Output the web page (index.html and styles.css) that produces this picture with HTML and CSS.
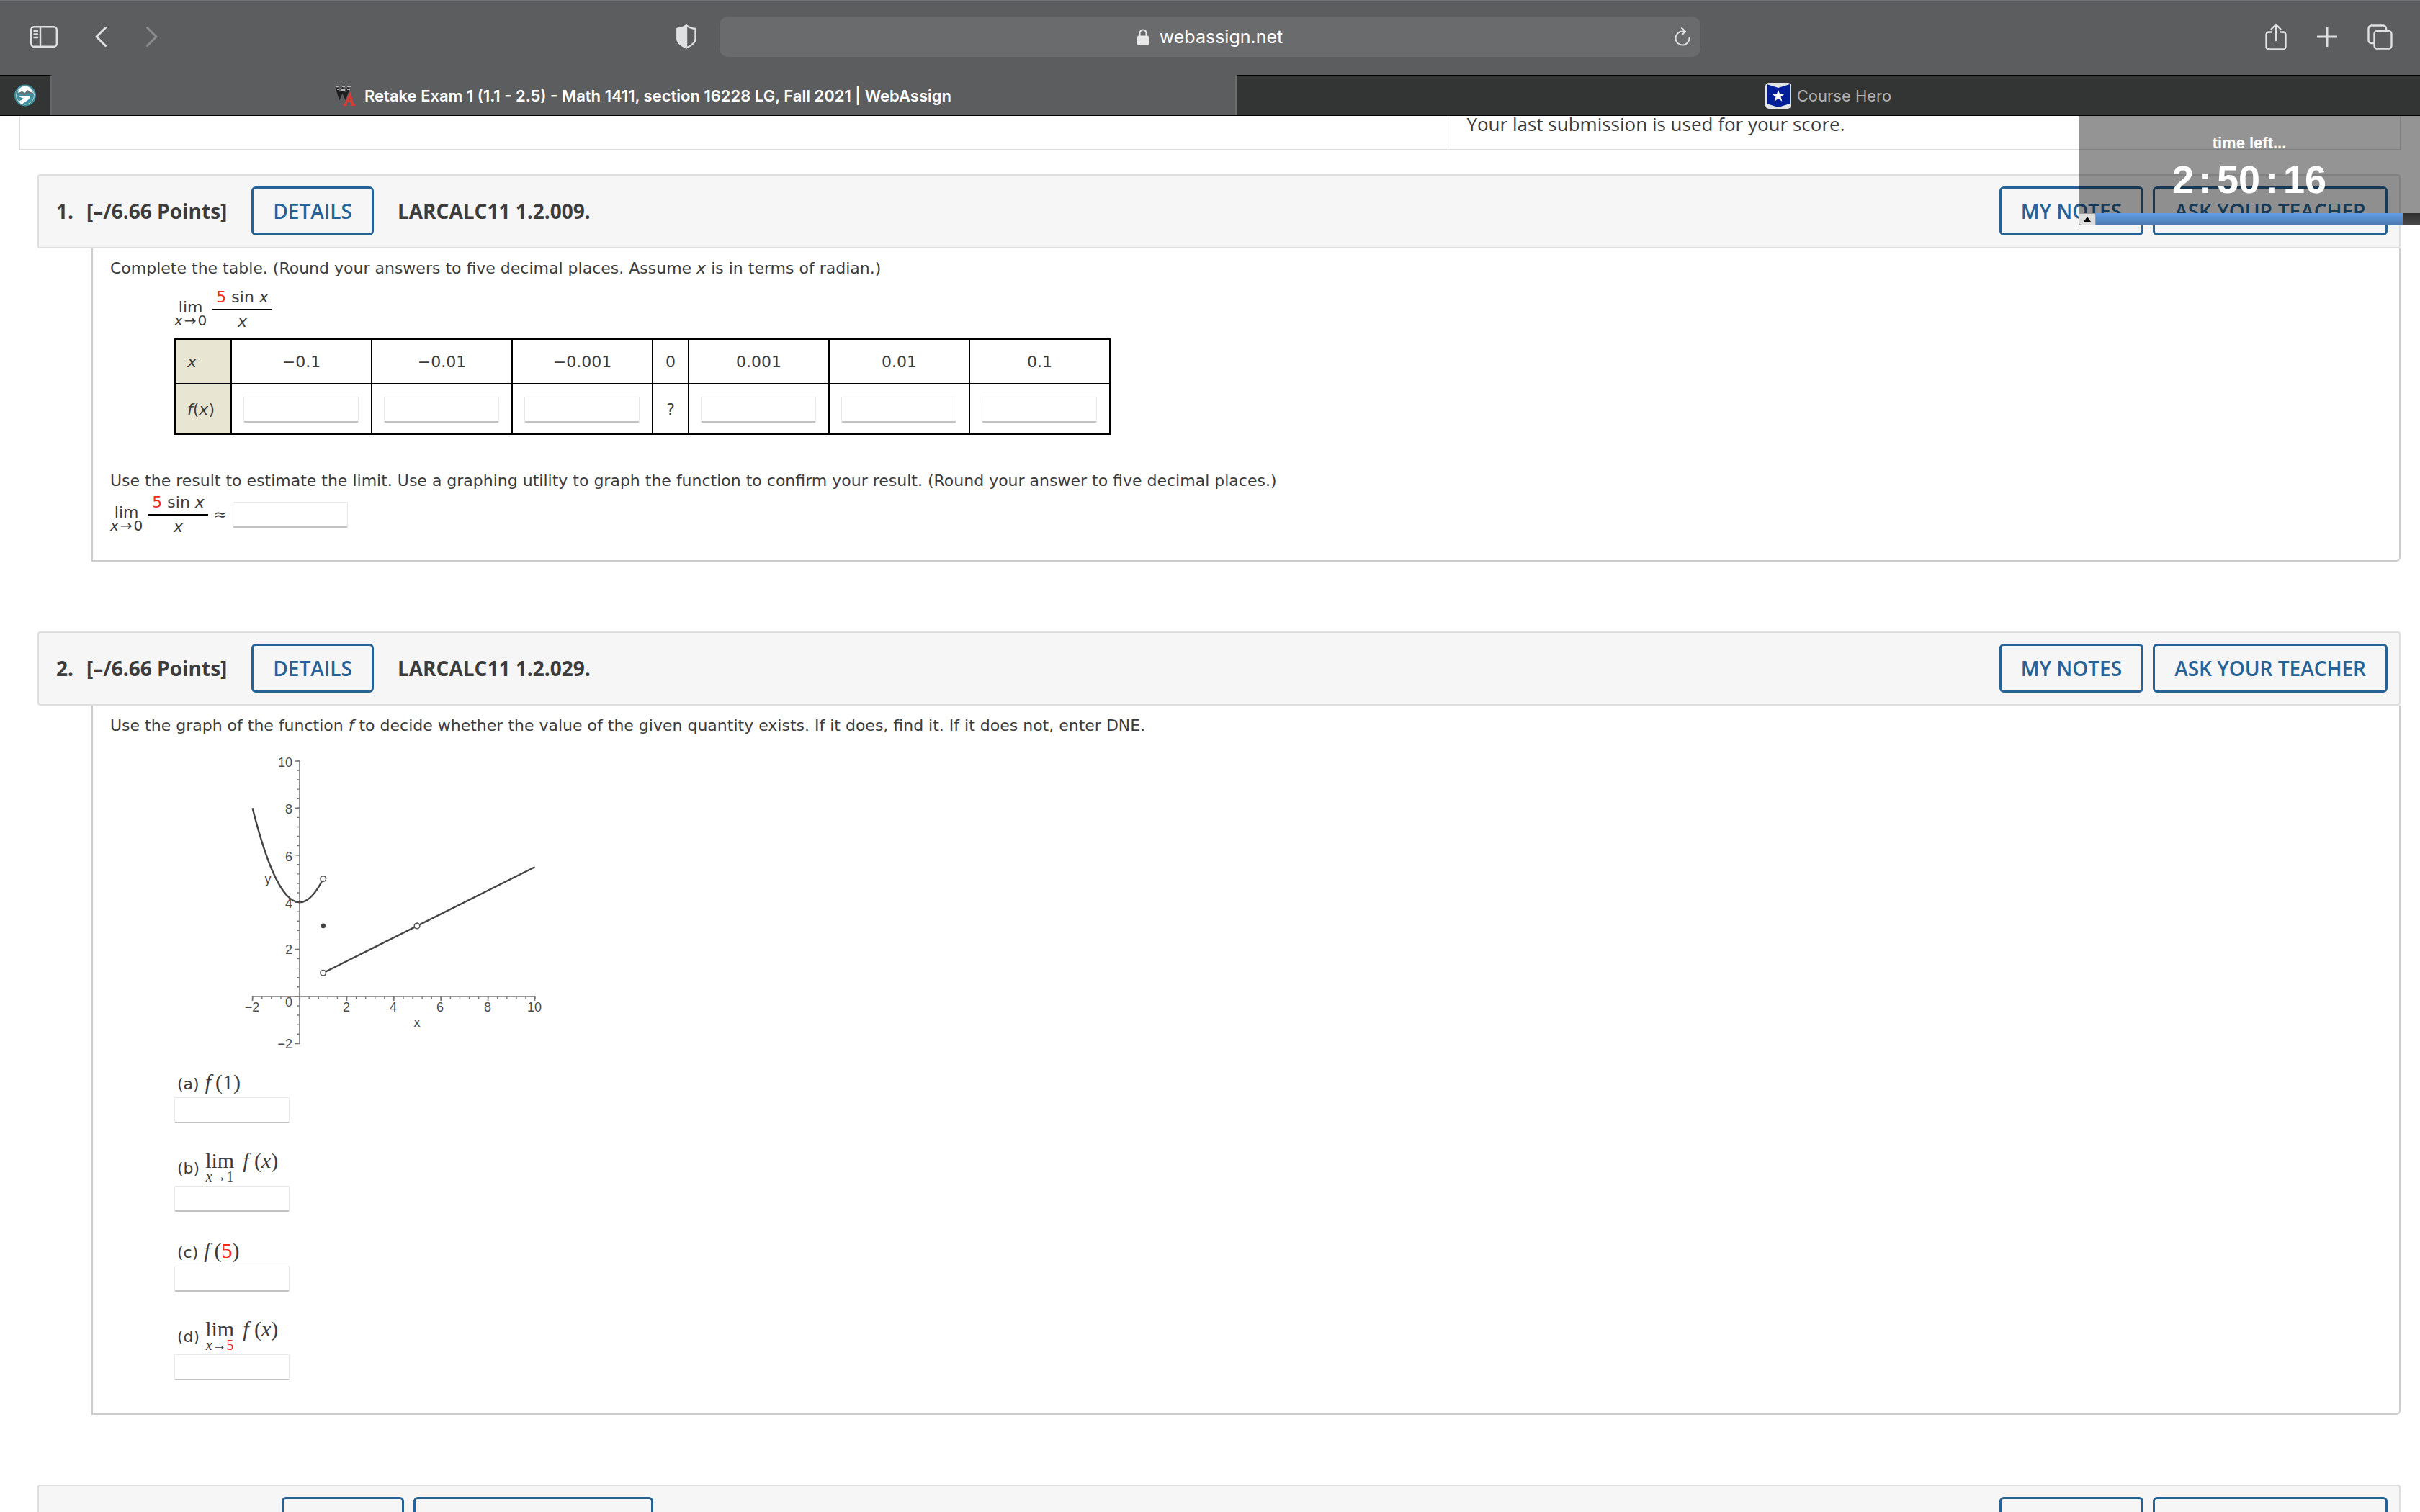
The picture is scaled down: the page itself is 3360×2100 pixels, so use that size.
FILE: index.html
```html
<!DOCTYPE html>
<html lang="en">
<head>
<meta charset="UTF-8">
<title>Retake Exam 1 (1.1 - 2.5) - Math 1411, section 16228 LG, Fall 2021 | WebAssign</title>
<link rel="stylesheet" href="styles.css">
</head>
<body>
<header class="toolbar">
    <div class="toolbar_left">
        <button class="icon" aria-label="Sidebar">
            <svg width="38" height="30" viewBox="0 0 38 30"><rect x="1.2" y="1.2" width="35.6" height="27.6" rx="4"/><path d="M14 1v28M5.500 7h4.500M5.500 11.500h4.500M5.500 16h4.500"/></svg>
        </button>
        <button class="icon back" aria-label="Back">
            <svg width="16" height="28" viewBox="0 0 16 28"><path d="M14.500 1.500L2 14l12.500 12.500" stroke-width="3"/></svg>
        </button>
        <button class="icon forward" aria-label="Forward" disabled>
            <svg width="16" height="28" viewBox="0 0 16 28"><path d="M1.500 1.500L14 14L1.500 26.500" stroke-width="3"/></svg>
        </button>
        <button class="icon shield" aria-label="Privacy report">
            <svg width="28" height="34" viewBox="0 0 28 34"><path d="M14 1.500C10 4.500 6 5.500 1.500 6v14c0 6 6 9.500 12.500 12.500C20.500 29.500 26.500 26 26.500 20V6C22 5.500 18 4.500 14 1.500z"/><path d="M14 1.500C10 4.500 6 5.500 1.500 6v14c0 6 6 9.500 12.500 12.500z" fill="#dfe0e1"/></svg>
        </button>
    </div>
    <div class="address">
        <svg class="lock" width="16" height="23" viewBox="0 0 16 23"><rect x="0" y="9.500" width="16" height="13.500" rx="2" fill="#e8e8e8"/><path d="M3.500 10V6a4.500 4.500 0 0 1 9 0v4" fill="none" stroke="#e8e8e8" stroke-width="2"/></svg>
        <span>webassign.net</span>
        <button class="icon reload" aria-label="Reload">
            <svg width="22" height="26" viewBox="0 0 22 26"><path d="M20.500 14.500A9.500 9.500 0 1 1 11 5.500h3.500M10 1l5 4.600l-4.600 4.800" stroke-width="2"/></svg>
        </button>
    </div>
    <div class="toolbar_right">
        <button class="icon" aria-label="Share">
            <svg width="30" height="38" viewBox="0 0 30 38"><path d="M9 12.500H5a3.500 3.500 0 0 0-3.500 3.500v17A3.500 3.500 0 0 0 5 36.500h20a3.500 3.500 0 0 0 3.500-3.500V16a3.500 3.500 0 0 0-3.500-3.500h-4M15 24V2M8.500 8.500L15 2l6.500 6.500"/></svg>
        </button>
        <button class="icon" aria-label="New tab">
            <svg width="28" height="28" viewBox="0 0 28 28"><path d="M14 1v26M1 14h26" stroke-width="3"/></svg>
        </button>
        <button class="icon" aria-label="Tab overview">
            <svg width="35" height="35" viewBox="0 0 35 35"><rect x="9.500" y="9" width="24" height="24.500" rx="4"/><path d="M9.500 26H5.500a4 4 0 0 1-4-4V5.500a4 4 0 0 1 4-4H22a4 4 0 0 1 4 4V9"/></svg>
        </button>
    </div>
</header>
<nav class="tabs">
    <a class="tab pinned" href="#" aria-label="Pinned site">
        <svg width="30" height="31" viewBox="0 0 30 31"><circle cx="15" cy="15.500" r="14" fill="#3f8f9c" stroke="#3f8f9c" stroke-width="2"/><circle cx="15" cy="15.500" r="12.500" fill="none" stroke="#c9d6d8" stroke-width="1"/><path d="M5 12C6 6 10 3 15 3s9 3 11 9l-4-1l-4-3l-3 4l-4-2z" fill="#fff"/><path d="M5 13l5-3l4 3l4-5l8 5l-8-1l-4 4l-4-3z" fill="#6b6f70"/><path d="M6 17l8 0h8l-2 4l-10 7l-4-4l7-4z" fill="#fff"/></svg>
    </a>
    <a class="tab current" href="#">
        <svg width="28" height="28" viewBox="0 0 28 28"><path d="M2 3l3.500 12l4-9l4 9L18 3" fill="none" stroke="#1d1d1d" stroke-width="4"/><path d="M0 1h5M9 1h4M16 1h5M2 5h3M8 6h5M16 5h4" stroke="#b5b5b5" stroke-width="2"/><path d="M13 27l7-15l4 15M15.500 21.500h8M10.500 26.500h5M21.500 26.500h6" fill="none" stroke="#d93a33" stroke-width="3"/></svg>
        <span>Retake Exam 1 (1.1 - 2.5) - Math 1411, section 16228 LG, Fall 2021 | WebAssign</span>
    </a>
    <a class="tab" href="#">
        <svg width="36" height="36" viewBox="0 0 36 36"><rect width="36" height="36" rx="5" fill="#e2e4e6"/><path d="M2 2l16 5l16-5v27l-16 5l-16-5z" fill="#001e96"/><path d="M18 10l2.200 5.800h6.300l-5 3.800l1.900 6.100l-5.400-3.700l-5.400 3.700l1.900-6.100l-5-3.800h6.300z" fill="#fff"/></svg>
        <span>Course Hero</span>
    </a>
</nav>

<main>
    <div class="summary">
        <div></div>
        <div>Your last submission is used for your score.</div>
    </div>

    <section class="question">
        <div class="q_header">
            <h2><span>1.</span><span>[–/6.66 Points]</span></h2>
            <button class="btn">DETAILS</button>
            <strong>LARCALC11 1.2.009.</strong>
            <div class="q_actions">
                <button class="btn">MY NOTES</button>
                <button class="btn">ASK YOUR TEACHER</button>
            </div>
        </div>
        <div class="q_body">
            <p>Complete the table. (Round your answers to five decimal places. Assume <i>x</i> is in terms of radian.)</p>
            <div class="work">
                <div class="formula">
                    <span class="lim"><span>lim</span><small><i>x</i>&hairsp;→&hairsp;0</small></span>
                    <span class="frac"><span><b class="rand">5</b> sin <i>x</i></span><span><i>x</i></span></span>
                </div>
                <table>
                    <tr><th><i>x</i></th><td>−0.1</td><td>−0.01</td><td>−0.001</td><td class="mid">0</td><td>0.001</td><td>0.01</td><td>0.1</td></tr>
                    <tr>
                        <th><i>f</i>(<i>x</i>)</th>
                        <td><input type="text" aria-label="f(-0.1)"></td>
                        <td><input type="text" aria-label="f(-0.01)"></td>
                        <td><input type="text" aria-label="f(-0.001)"></td>
                        <td class="mid">?</td>
                        <td><input type="text" aria-label="f(0.001)"></td>
                        <td><input type="text" aria-label="f(0.01)"></td>
                        <td><input type="text" aria-label="f(0.1)"></td>
                    </tr>
                </table>
            </div>
            <p>Use the result to estimate the limit. Use a graphing utility to graph the function to confirm your result. (Round your answer to five decimal places.)</p>
            <div class="formula">
                <span class="lim"><span>lim</span><small><i>x</i>&hairsp;→&hairsp;0</small></span>
                <span class="frac"><span><b class="rand">5</b> sin <i>x</i></span><span><i>x</i></span></span>
                <label for="limit">≈</label>
                <input type="text" id="limit">
            </div>
        </div>
    </section>

    <section class="question">
        <div class="q_header">
            <h2><span>2.</span><span>[–/6.66 Points]</span></h2>
            <button class="btn">DETAILS</button>
            <strong>LARCALC11 1.2.029.</strong>
            <div class="q_actions">
                <button class="btn">MY NOTES</button>
                <button class="btn">ASK YOUR TEACHER</button>
            </div>
        </div>
        <div class="q_body">
            <p>Use the graph of the function <i>f</i> to decide whether the value of the given quantity exists. If it does, find it. If it does not, enter DNE.</p>
            <!-- origin at 0,0 and 32.7 units per step -->
            <svg class="graph" width="412" height="420" viewBox="-76 -340 412 420">
                <g class="axes">
                    <path d="M0-327V66M-66 0H327"/>
                    <path class="minor" d="M-2 66V-328"/>
                    <path class="minor" d="M-66 2H328"/>
                    <path d="M-7-327H0M-7-261.600H0M-7-196.200H0M-7-130.800H0M-7-65.400H0M-7 0H0M-7 65.400H0"/>
                    <path d="M-65.400 0V6M65.400 0V6M130.800 0V6M196.200 0V6M261.600 0V6M326.500 0V6"/>
                </g>
                <g class="ticks_y">
                    <text x="-10" y="-319">10</text>
                    <text x="-10" y="-254">8</text>
                    <text x="-10" y="-188">6</text>
                    <text x="-10" y="-123">4</text>
                    <text x="-10" y="-59">2</text>
                    <text x="-10" y="14">0</text>
                    <text x="-10" y="72">−2</text>
                </g>
                <g class="ticks_x">
                    <text x="-66" y="21">−2</text>
                    <text x="65" y="21">2</text>
                    <text x="130" y="21">4</text>
                    <text x="195" y="21">6</text>
                    <text x="261" y="21">8</text>
                    <text x="326" y="21">10</text>
                    <text x="163" y="42">x</text>
                    <text x="-44" y="-157">y</text>
                </g>
                <path class="curve" d="M-65.400-261.600Q-16.300-65.400 32.700-163.500M32.700-32.700L326.500-179.800"/>
                <circle class="hole" cx="32.700" cy="-163.500" r="3.800"/>
                <circle class="hole" cx="32.700" cy="-32.700" r="3.800"/>
                <circle class="hole" cx="163" cy="-98.100" r="3.800"/>
                <circle class="dot" cx="32.700" cy="-98.100" r="3.300"/>
            </svg>
            <div class="work parts">
                <div class="part">
                    <label for="part_a"><span class="key">(a)</span><span class="math"><span><i>f</i>&thinsp;(1)</span></span></label>
                    <input type="text" id="part_a">
                </div>
                <div class="part">
                    <label for="part_b"><span class="key">(b)</span><span class="math tall"><span class="mlim"><span>lim</span><small><i>x</i>→1</small></span><span><i>f</i> (<i>x</i>)</span></span></label>
                    <input type="text" id="part_b">
                </div>
                <div class="part">
                    <label for="part_c"><span class="key">(c)</span><span class="math"><span><i>f</i>&thinsp;(<span class="rand">5</span>)</span></span></label>
                    <input type="text" id="part_c">
                </div>
                <div class="part">
                    <label for="part_d"><span class="key">(d)</span><span class="math tall"><span class="mlim"><span>lim</span><small><i>x</i>→<span class="rand">5</span></small></span><span><i>f</i> (<i>x</i>)</span></span></label>
                    <input type="text" id="part_d">
                </div>
            </div>
        </div>
    </section>

    <section class="question">
        <div class="q_header">
            <h2><span>3.</span><span>[3.33/6.66 Points]</span></h2>
            <button class="btn">DETAILS</button>
            <button class="btn">PREVIOUS ANSWERS</button>
            <div class="q_actions">
                <button class="btn">MY NOTES</button>
                <button class="btn">ASK YOUR TEACHER</button>
            </div>
        </div>
    </section>

    <aside class="timer">
        <div class="timer_face">
            <span>time left...</span>
            <div class="clock"><span>2</span><span>:</span><span>50</span><span>:</span><span>16</span></div>
        </div>
        <div class="timer_bar">
            <button aria-label="Hide timer"><svg width="10" height="7" viewBox="0 0 10 7"><path d="M5 0l5 7H0z"/></svg></button>
            <div class="left"></div>
        </div>
    </aside>
</main>
</body>
</html>
```
FILE: styles.css
```css
* {
    box-sizing: border-box;
}

body {
    margin: 0;
    height: 100vh;
    overflow: hidden;
    display: flex;
    flex-direction: column;
    background: #fff;
    color: #3c3c3c;
    font-family: "DejaVu Sans", Verdana, sans-serif;
    font-size: 22px;
    line-height: 28px;
}

button {
    font: inherit;
    cursor: pointer;
}

/* browser bar */

.toolbar {
    display: grid;
    grid-template-columns: 1fr 40.55% 1fr;
    align-items: center;
    flex: none;
    height: 104px;
    padding-bottom: 2px;
    box-shadow: inset 0 2px #727376;
    background: #5c5d5f;
}

.icon {
    display: flex;
    padding: 0;
    border: 0;
    background: none;
}

.icon svg {
    fill: none;
    stroke: #dfe0e1;
    stroke-width: 2.4;
    stroke-linecap: round;
    stroke-linejoin: round;
}

.toolbar_left {
    display: flex;
    align-items: center;
    padding: 0 32px 0 42px;
}

.back {
    margin-left: 52px;
}

.forward {
    margin-left: 55px;
    opacity: 0.35;
}

.shield {
    margin-left: auto;
}

.address {
    display: flex;
    justify-content: center;
    align-items: center;
    gap: 15px;
    height: 56px;
    border-radius: 12px;
    background: #6a6b6d;
    color: #fff;
    font-family: Inter, sans-serif;
    font-size: 25px;
    position: relative;
}

.reload {
    position: absolute;
    right: 14px;
}

.toolbar_right {
    display: flex;
    justify-content: flex-end;
    align-items: center;
    gap: 42px;
    padding-right: 38px;
}

.tabs {
    display: flex;
    flex: none;
    height: 57px;
    border-bottom: 1px solid #000;
    background: #5c5d5f;
    font-family: Inter, sans-serif;
    font-size: 22px;
}

.tab {
    display: flex;
    flex: 1;
    justify-content: center;
    align-items: center;
    gap: 8px;
    border-top: 1px solid #000;
    background: #333434;
    color: #b0b0b0;
    text-decoration: none;
}

.pinned {
    flex: none;
    width: 72px;
    border-right: 2px solid #666769;
}

.current {
    gap: 12px;
    border-top-color: #5c5d5f;
    border-right: 2px solid #6c6d6f;
    background: #5c5d5f;
    color: #fff;
    font-weight: 600;
}

/* page */

main {
    position: relative;
    flex: 1;
    min-height: 0;
    overflow: hidden;
}

.summary {
    display: grid;
    grid-template-columns: 3fr 2fr;
    height: 47px;
    margin: 0 27px 34px;
    border: 1px solid #ddd;
    border-width: 0 1px 1px;
    font-family: "Open Sans", sans-serif;
    font-size: 26px;
    line-height: 22px;
}

.summary div + div {
    padding-left: 25px;
    border-left: 1px solid #ddd;
}

.question {
    margin: 0 27px 97px 52px;
}

.q_header {
    display: flex;
    align-items: center;
    height: 103px;
    padding: 0 16px 2px 24px;
    border: 2px solid #dedede;
    border-radius: 4px;
    background: #f6f6f6;
    font-family: "Open Sans", sans-serif;
    font-size: 28px;
}

.q_header h2 {
    display: flex;
    gap: 18px;
    margin: 0 34px 0 0;
    font-size: 28px;
}

.q_header strong {
    margin-left: 20px;
}

.btn {
    height: 68px;
    margin-right: 13px;
    padding: 0 27px;
    border: 3px solid #266295;
    border-radius: 6px;
    background: none;
    color: #266295;
    font-weight: 600;
}

.q_actions {
    display: flex;
    margin-left: auto;
}

.q_actions .btn:last-child {
    margin-right: 0;
}

.q_body {
    margin-left: 75px;
    padding: 14px 24px 30px;
    border: 2px solid #ccc;
    border-top: 0;
    border-radius: 0 0 6px 0;
}

.q_body p {
    margin: 0;
}

.work {
    margin-left: 89px;
}

.rand {
    color: #f22a1c;
    font-weight: normal;
}

input {
    width: 160px;
    height: 36px;
    border: 1px solid #e8e8e8;
    border-bottom: 2px solid #c2c2c2;
    border-radius: 2px;
    background: #fff;
    font: inherit;
}

.formula {
    display: flex;
    align-items: center;
    gap: 8px;
    height: 66px;
}

.work .formula {
    margin-top: 10px;
}

.lim {
    display: flex;
    flex-direction: column;
    align-items: center;
    padding-top: 10px;
    line-height: 20px;
}

.lim small {
    font-size: 20px;
    line-height: 16px;
}

.frac {
    display: flex;
    flex-direction: column;
    text-align: center;
    line-height: 32px;
}

.frac span:first-child {
    padding: 0 5px;
    border-bottom: 2px solid #000;
}

table {
    margin: 7px 0 50px;
    border-collapse: collapse;
}

th, td {
    width: 195px;
    height: 62px;
    padding: 2px 16px 0;
    border: 2px solid #000;
    font-weight: normal;
    text-align: center;
}

tr + tr > * {
    height: 70px;
}

td input {
    display: block;
}

th {
    width: 78px;
    background: #e8e5d3;
    text-align: left;
}

.mid {
    width: 50px;
}

/* graph of f */

.graph {
    display: block;
    margin: 22px 0 18px 187px;
    font-family: "Liberation Sans", sans-serif;
    font-size: 18px;
    fill: #4c4c4c;
}

.axes {
    fill: none;
    stroke: #777;
    stroke-width: 1.6;
}

.minor {
    stroke-width: 3;
    stroke-dasharray: 1.4 11.68;
}

.ticks_y {
    text-anchor: end;
}

.ticks_x {
    text-anchor: middle;
}

.curve {
    fill: none;
    stroke: #444;
    stroke-width: 2.4;
}

.hole {
    fill: #fff;
    stroke: #555;
    stroke-width: 1.6;
}

.dot {
    fill: #444;
}

/* answer parts */

.part {
    margin-bottom: 33px;
}

.part:last-child {
    margin-bottom: 16px;
}

.part label {
    display: flex;
    align-items: center;
    gap: 8px;
    min-height: 42px;
    padding-left: 4px;
}

.part input {
    display: block;
}

.key {
    padding-top: 6px;
}

.math {
    display: flex;
    gap: 12px;
    font-family: "Liberation Serif", serif;
    font-size: 30px;
}

.tall {
    padding-top: 5px;
}

.mlim {
    display: flex;
    flex-direction: column;
    align-items: center;
}

.mlim small {
    font-size: 20px;
    line-height: 16px;
    margin-bottom: 5px;
}

/* countdown */

.timer {
    position: absolute;
    top: 0;
    right: 0;
    width: 474px;
    color: #fff;
    font-family: "Liberation Sans", sans-serif;
    font-weight: bold;
    text-align: center;
}

.timer_face {
    height: 135px;
    padding-top: 24px;
    background: rgba(0, 0, 0, 0.42);
}

.clock {
    display: flex;
    justify-content: center;
    gap: 7px;
    margin-top: 4px;
    font-size: 54px;
    line-height: 64px;
}

.timer_bar {
    display: flex;
    height: 17px;
    padding-right: 24px;
    background: linear-gradient(#2e2e2e, #4a4a4a);
}

.timer_bar button {
    display: flex;
    justify-content: center;
    align-items: center;
    width: 24px;
    padding: 0;
    border: 1px solid #999;
    border-radius: 0 0 0 4px;
    background: #ddd;
}

.timer_bar .left {
    flex: 1;
    background: linear-gradient(#629fe8, #4b78ae);
}
```
